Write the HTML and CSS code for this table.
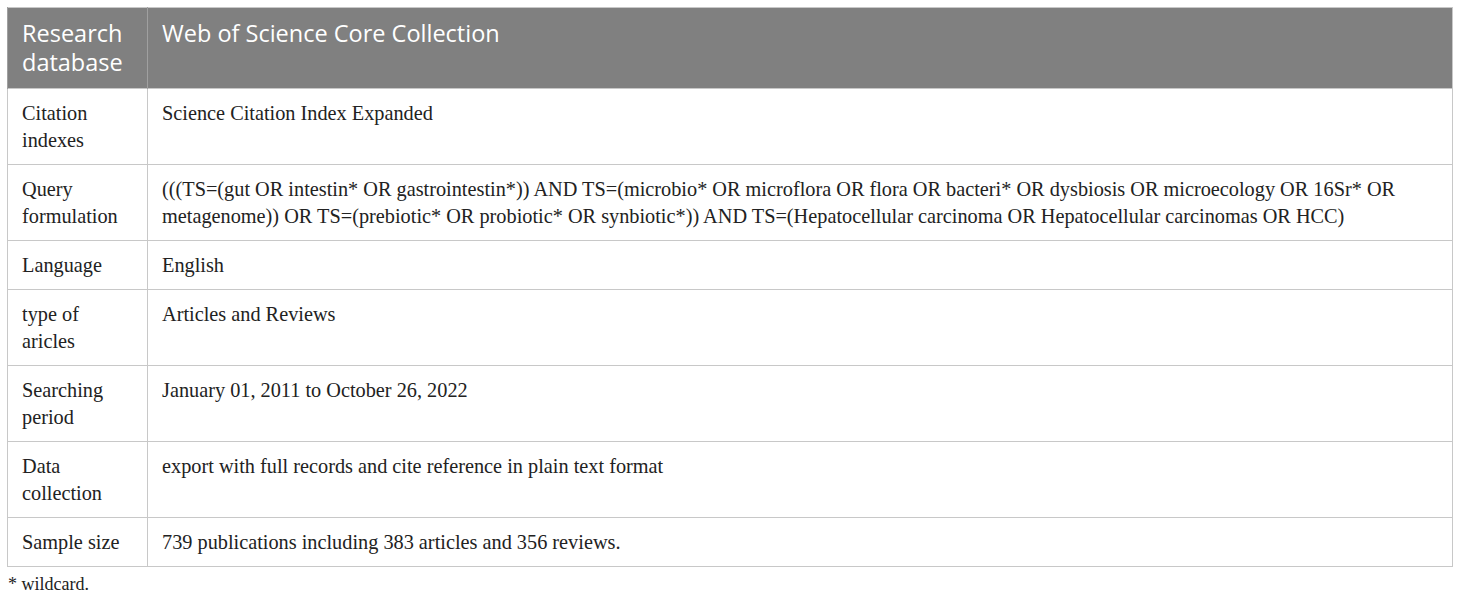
FILE: index.html
```html
<!DOCTYPE html>
<html>
<head>
<meta charset="utf-8">
<link rel="stylesheet" href="styles.css">
</head>
<body>
<div class="wrap">
<table class="data">
  <thead>
    <tr><th class="c1">Research database</th><th>Web of Science Core Collection</th></tr>
  </thead>
  <tbody>
    <tr><td class="c1">Citation indexes</td><td>Science Citation Index Expanded</td></tr>
    <tr><td class="c1">Query formulation</td><td>(((TS=(gut OR intestin* OR gastrointestin*)) AND TS=(microbio* OR microflora OR flora OR bacteri* OR dysbiosis OR microecology OR 16Sr* OR metagenome)) OR TS=(prebiotic* OR probiotic* OR synbiotic*)) AND TS=(Hepatocellular carcinoma OR Hepatocellular carcinomas OR HCC)</td></tr>
    <tr><td class="c1">Language</td><td>English</td></tr>
    <tr><td class="c1">type of aricles</td><td>Articles and Reviews</td></tr>
    <tr><td class="c1">Searching period</td><td>January 01, 2011 to October 26, 2022</td></tr>
    <tr><td class="c1">Data collection</td><td>export with full records and cite reference in plain text format</td></tr>
    <tr><td class="c1">Sample size</td><td>739 publications including 383 articles and 356 reviews.</td></tr>
  </tbody>
</table>
<p class="note">* wildcard.</p>
</div>
</body>
</html>
```
FILE: styles.css
```css
html, body {
  margin: 0;
  padding: 0;
  background: #ffffff;
}
.wrap {
  padding: 7px 7px 0 7px;
}
.data {
  width: 1446px;
  border-collapse: collapse;
  border: 1px solid #c8c8c8;
}
.data th {
  background: #808080;
  color: #ffffff;
  font-family: "Open Sans", "Noto Sans", sans-serif;
  font-weight: 400;
  font-size: 23.5px;
  line-height: 29px;
  text-align: left;
  vertical-align: top;
  padding: 11px 14px 11px 14px;
  border-left: 1px solid #a0a0a0;
}
.data td {
  font-family: "Liberation Serif", "Times New Roman", serif;
  font-size: 20.3px;
  line-height: 27px;
  color: #222222;
  vertical-align: top;
  padding: 11px 14px 10px 14px;
  border: 1px solid #c8c8c8;
}
.data .c1 {
  width: 111px;
}
.note {
  margin: 5px 0 0 1px;
  font-family: "Liberation Serif", "Times New Roman", serif;
  font-size: 18px;
  line-height: 24px;
  color: #222222;
}
```
